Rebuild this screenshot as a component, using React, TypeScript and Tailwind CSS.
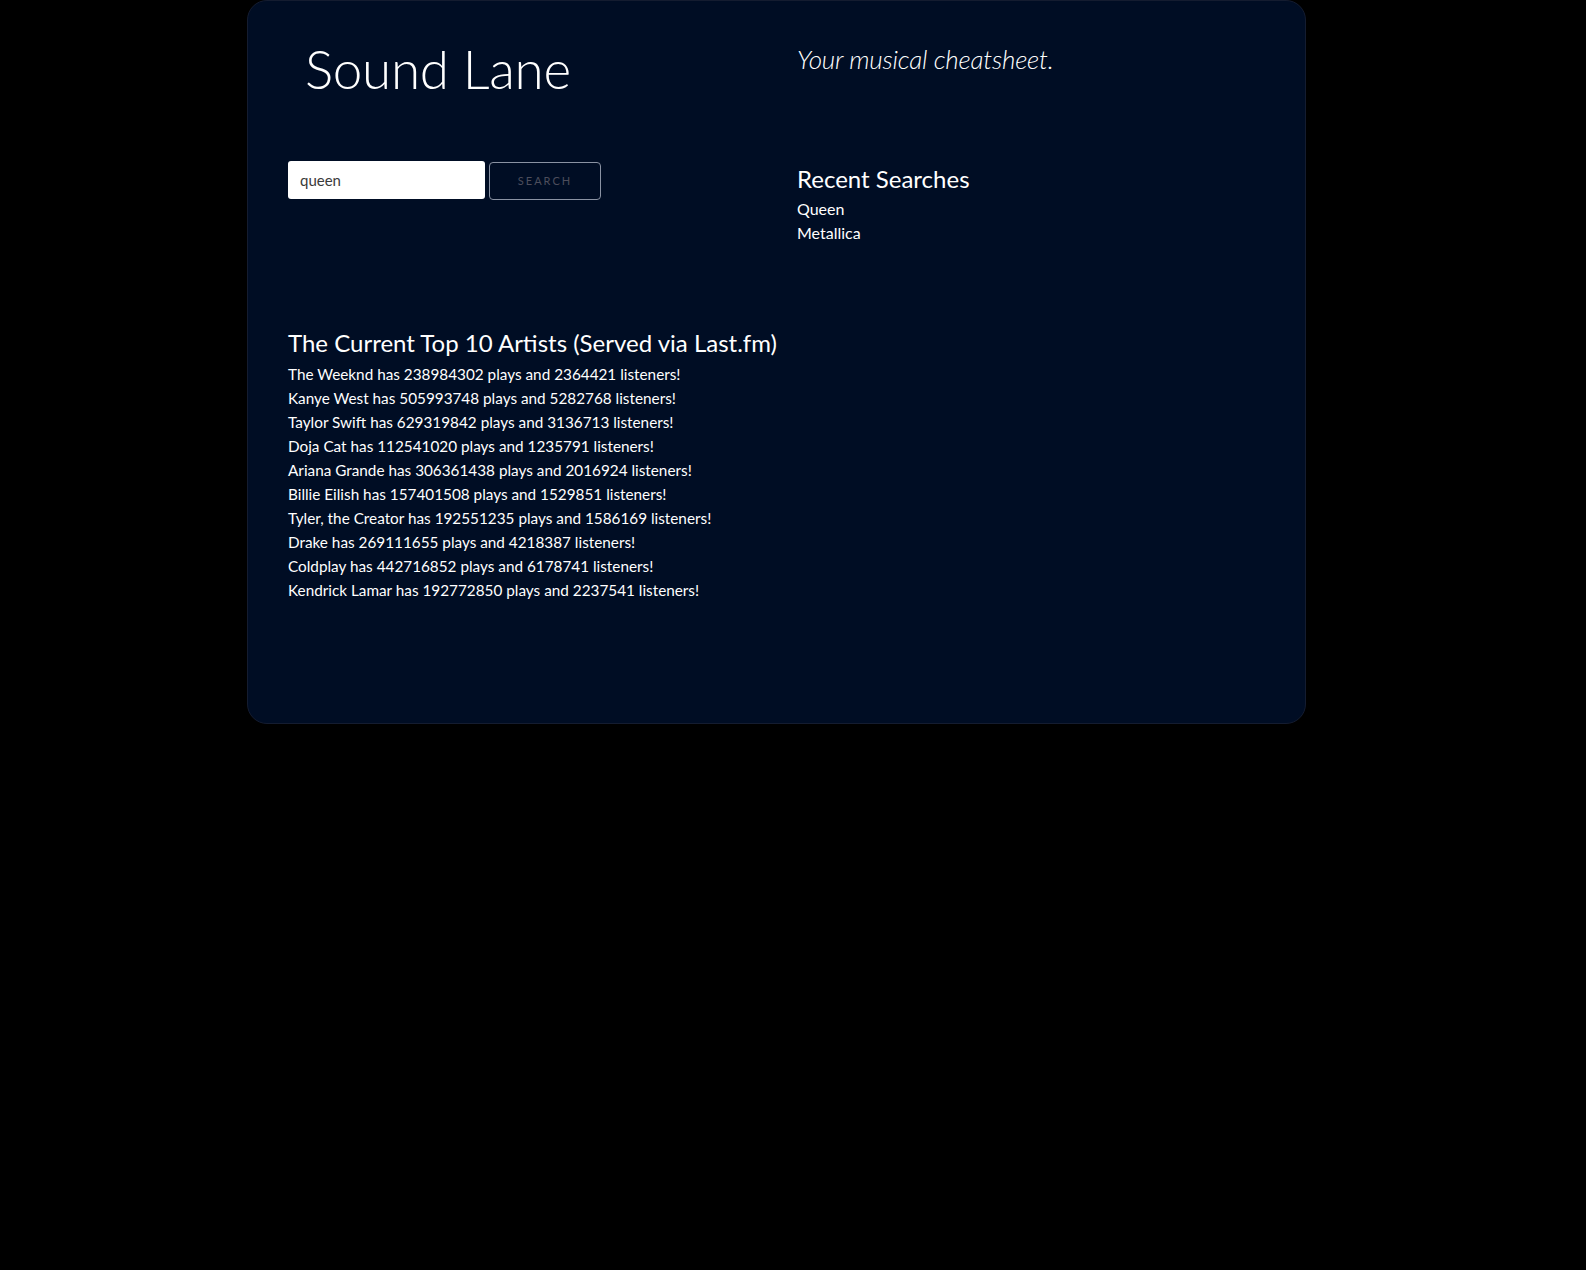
const artists = [
  { name: "The Weeknd", plays: "238984302", listeners: "2364421" },
  { name: "Kanye West", plays: "505993748", listeners: "5282768" },
  { name: "Taylor Swift", plays: "629319842", listeners: "3136713" },
  { name: "Doja Cat", plays: "112541020", listeners: "1235791" },
  { name: "Ariana Grande", plays: "306361438", listeners: "2016924" },
  { name: "Billie Eilish", plays: "157401508", listeners: "1529851" },
  { name: "Tyler, the Creator", plays: "192551235", listeners: "1586169" },
  { name: "Drake", plays: "269111655", listeners: "4218387" },
  { name: "Coldplay", plays: "442716852", listeners: "6178741" },
  { name: "Kendrick Lamar", plays: "192772850", listeners: "2237541" },
];

const recent = ["Queen", "Metallica"];

export default function App() {
  return (
    <div className="min-h-[1270px] bg-black font-['Lato','Liberation_Sans',sans-serif] text-white">
      <div className="ml-[247px] w-[1059px] h-[724px] rounded-[20px] border border-[#141c30] bg-[#000d24] px-10">
        {/* header */}
        <div className="grid grid-cols-[509px_1fr]">
          <h1 className="pl-[17px] pt-[41px] text-[53px] font-light leading-none tracking-[-0.3px]">Sound Lane</h1>
          <p className="pt-[45px] text-[26px] font-light italic leading-none tracking-[-0.2px]">Your musical cheatsheet.</p>
        </div>

        {/* search + recent */}
        <div className="mt-[66px] grid grid-cols-[509px_1fr]">
          <div className="flex items-start gap-1">
            <input
              defaultValue="queen"
              className="h-[38px] w-[197px] rounded-[3px] bg-white px-3 text-[15px] text-[#3a3a3a] outline-none"
            />
            <button className="mt-[1px] h-[38px] w-[112px] rounded-[4px] border border-[#8a92a3] text-[11px] tracking-[2px] text-[#4d4d5c]">
              SEARCH
            </button>
          </div>
          <div className="pt-[4px]">
            <h2 className="text-[24px] leading-[28px]">Recent Searches</h2>
            <ul className="mt-[4px] text-[16px] leading-[24px]">
              {recent.map((r) => (
                <li key={r}>{r}</li>
              ))}
            </ul>
          </div>
        </div>

        {/* top artists */}
        <div className="mt-[84px]">
          <h2 className="text-[24px] leading-[28px]">The Current Top 10 Artists (Served via Last.fm)</h2>
          <ul className="mt-[5px] text-[15.3px] leading-[24px]">
            {artists.map((a) => (
              <li key={a.name}>
                {a.name} has {a.plays} plays and {a.listeners} listeners!
              </li>
            ))}
          </ul>
        </div>
      </div>
    </div>
  );
}
